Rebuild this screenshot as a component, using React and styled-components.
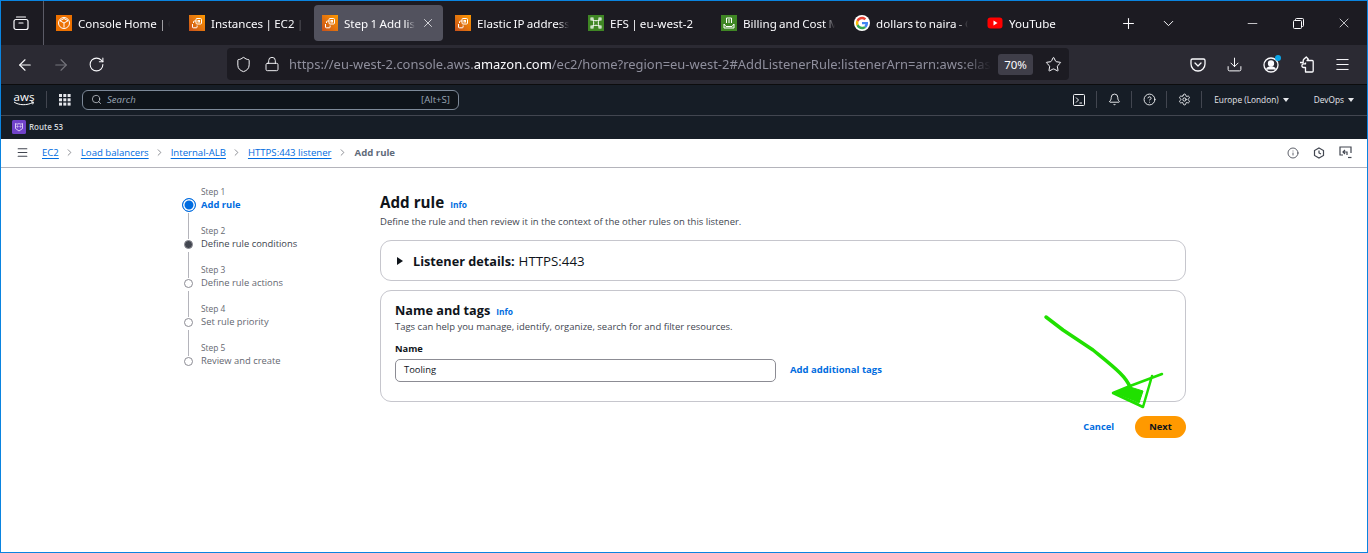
import { Fragment } from "react"
import styled, { createGlobalStyle } from "styled-components"
import {
  ArrowLeft, ArrowRight, RotateCw, Shield, Lock, Star, Download, Menu,
  Plus, ChevronDown, Minus, X, Search, Bell, Settings, CircleHelp, Info, ChevronRight,
} from "lucide-react"

const Global = createGlobalStyle`
  html, body { margin: 0; padding: 0; background: #fff; }
  body { width: 1368px; height: 553px; overflow: hidden; }
  * { box-sizing: border-box; }
`

const Frame = styled.div`
  position: relative;
  width: 1368px;
  height: 553px;
  border: 1px solid #0a84e0;
  display: flex;
  flex-direction: column;
  overflow: hidden;
  background: #fff;
  font-family: "Open Sans", "Noto Sans", sans-serif;
`
const Glyph = styled.svg`
  flex: none;
`

/* browser chrome */
const TabBar = styled.div`
  height: 44px;
  flex: none;
  background: #1c1b22;
  display: flex;
  align-items: stretch;
  color: #fbfbfe;
  font-family: "Noto Sans", "Open Sans", sans-serif;
`
const TabGroups = styled.div`
  width: 43px;
  flex: none;
  border-right: 1px solid #5b5b66;
  padding-right: 2px;
  display: flex;
  align-items: center;
  justify-content: center;
`
const Tab = styled.div`
  width: 133px;
  flex: none;
  display: flex;
  align-items: center;
  gap: 6px;
  padding: 4px 7px 4px 12px;
  position: relative;
  z-index: 0;
  font-size: 11.600px;
  word-spacing: -0.7px;

  &::before {
    content: "";
    display: ${p => (p.$active ? "block" : "none")};
    position: absolute;
    inset: 4px 0 4px 4px;
    border-radius: 4px;
    background: #52525e;
    z-index: -1;
  }
`
const TabTitle = styled.span`
  flex: 1;
  min-width: 0;
  white-space: nowrap;
  overflow: hidden;
  -webkit-mask-image: linear-gradient(to right, #000 88%, transparent 100%);
  mask-image: linear-gradient(to right, #000 88%, transparent 100%);
`
const TabClose = styled.span`
  display: flex;
  width: 14px;
  flex: none;
  margin-right: 1px;
`
const WindowTools = styled.div`
  display: flex;
  align-items: center;
  flex: 1;
`
const TabAction = styled.span`
  display: flex;
  width: 40px;
  justify-content: center;
`
const WindowButtons = styled.div`
  margin-left: auto;
  display: flex;
  align-items: center;
`
const WindowButton = styled.span`
  display: flex;
  width: 46px;
  justify-content: center;
`
const Toolbar = styled.div`
  height: 40px;
  flex: none;
  background: #2b2a33;
  display: flex;
  align-items: center;
  padding: 0 0 0 15px;
  color: #fbfbfe;
  border-bottom: 1px solid #0c0c0d;
`
const NavButtons = styled.div`
  display: flex;
  align-items: center;
  gap: 18px;
  width: 211px;
  flex: none;
`
const UrlBar = styled.div`
  width: 842px;
  height: 32px;
  flex: none;
  margin-top: -1px;
  background: #1c1b22;
  border-radius: 4px;
  display: flex;
  align-items: center;
  padding-left: 8px;
  font-family: "Noto Sans", "Open Sans", sans-serif;
`
const UrlText = styled.div`
  flex: 1;
  min-width: 0;
  margin-left: 9px;
  font-size: 12.950px;
  color: #8f8f9d;
  white-space: nowrap;
  overflow: hidden;
  -webkit-mask-image: linear-gradient(to right, #000 96%, transparent 100%);
  mask-image: linear-gradient(to right, #000 96%, transparent 100%);

  b { font-weight: 400; color: #fbfbfe; }
`
const ZoomBadge = styled.span`
  width: 35px;
  height: 21px;
  flex: none;
  margin: 0 12px 0 7px;
  border-radius: 3px;
  background: #3f3e49;
  color: #fbfbfe;
  font-size: 11.500px;
  display: flex;
  align-items: center;
  justify-content: center;
`
const UrlStar = styled(Star)`
  flex: none;
  margin-right: 7px;
`
const UrlIconRow = styled.span`
  display: flex;
  align-items: center;
  gap: 12px;
  flex: none;
`
const ToolIcons = styled.div`
  display: flex;
  align-items: center;
  gap: 20px;
  margin-left: 121px;
`
const ProfileIcon = styled.span`
  position: relative;
  display: flex;

  &::after {
    content: "";
    position: absolute;
    top: -2px;
    right: -2px;
    width: 6px;
    height: 6px;
    border-radius: 50%;
    background: #0aa5e8;
  }
`

/* aws console header */
const ConsoleNav = styled.div`
  height: 31px;
  flex: none;
  background: #161d26;
  border-bottom: 1px solid #424650;
  display: flex;
  align-items: center;
  padding: 0 0 1px 12px;
  color: #e5e7eb;
  font-size: 8.400px;
`
const AwsLogo = styled.div`
  width: 22px;
  flex: none;
  display: flex;
  flex-direction: column;
  align-items: center;
  color: #fff;
  font-weight: 400;
  font-size: 11.500px;
  line-height: 9px;
  margin-top: -1px;
`
const NavDivider = styled.span`
  width: 1px;
  height: 17px;
  flex: none;
  background: #424650;
  margin: ${p => p.$margin || "0"};
`
const Waffle = styled(Glyph)`
  margin-left: 12px;
`
const SearchBox = styled.div`
  width: 377px;
  height: 20px;
  flex: none;
  margin-left: 11px;
  border: 1px solid #7d8998;
  border-radius: 6px;
  background: #0f141a;
  display: flex;
  align-items: center;
  padding: 0 8px;
  gap: 5px;

  em { color: #9ba7b6; font-size: 9.600px; }
  span { margin-left: auto; color: #9ba7b6; font-size: 9.600px; }
`
const ConsoleRight = styled.div`
  margin-left: auto;
  display: flex;
  align-items: center;
  height: 100%;
  padding-right: 13px;
`
const NavIcon = styled.span`
  display: flex;
  width: 14px;
  justify-content: center;
  flex: none;
  color: #f3f4f6;
`
const NavMenu = styled.span`
  display: flex;
  align-items: center;
  gap: 4px;
  white-space: nowrap;
  margin-left: ${p => p.$left || 0}px;
  font-size: 8.300px;
  font-weight: 500;

  &::after {
    content: "";
    border-left: 3px solid transparent;
    border-right: 3px solid transparent;
    border-top: 4px solid #e5e7eb;
  }
`
const Favourites = styled.div`
  height: 23px;
  flex: none;
  background: #161d26;
  display: flex;
  align-items: center;
  gap: 3px;
  padding: 0 0 2px 11px;
  color: #d1d5db;
  font-size: 8px;
  font-weight: 600;
`

/* breadcrumbs */
const CrumbBar = styled.div`
  height: 29px;
  flex: none;
  background: #fff;
  border-bottom: 1px solid #b4b4bb;
  display: flex;
  align-items: center;
  padding: 0 15px 1px;
  font-size: 9.600px;
`
const Crumbs = styled.div`
  display: flex;
  align-items: center;
  margin-left: 13px;
`
const Crumb = styled.a`
  color: #006ce0;
  text-decoration: underline;
  text-underline-offset: 2px;
`
const CrumbCurrent = styled.span`
  color: #5f6b7a;
  font-weight: 700;
  margin-left: 1px;
`
const CrumbSep = styled.span`
  display: flex;
  width: 22px;
  justify-content: center;
  color: #656871;
`
const CrumbTools = styled.div`
  margin-left: auto;
  display: flex;
  align-items: center;
  gap: 14px;
  color: #424650;
`

/* page body */
const Page = styled.div`
  flex: 1;
  display: flex;
  align-items: flex-start;
  padding: 18px 0 0 174px;
  color: #0f141a;
`
const Steps = styled.ol`
  list-style: none;
  margin: 0;
  padding: 0;
  width: 205px;
  flex: none;
`
const Step = styled.li`
  display: grid;
  grid-template-columns: 13px 1fr;
  grid-template-rows: 12px 14px;
  align-content: start;
  column-gap: 6px;
  height: 39px;
  position: relative;
  padding-left: 7px;

  &:not(:last-child)::after {
    content: "";
    position: absolute;
    left: 13px;
    top: 27px;
    bottom: -14px;
    width: 1px;
    background: #b4b4bb;
  }
`
const StepLabel = styled.span`
  grid-column: 2;
  grid-row: 1;
  font-size: 8.400px;
  line-height: 12px;
  color: #656871;
`
const markSize = { current: 14, next: 9, todo: 9 }
const StepMark = styled.span`
  grid-column: 1;
  grid-row: 2;
  justify-self: center;
  align-self: center;
  border-radius: 50%;
  width: ${p => markSize[p.$state]}px;
  height: ${p => markSize[p.$state]}px;
  border: ${p => (p.$state === "current" ? "1.5px solid #006ce0" : "1px solid #8c8c94")};
  box-shadow: ${p => (p.$state === "current" ? "inset 0 0 0 1.5px #fff" : "none")};
  background: ${p => (p.$state === "current" ? "#006ce0" : p.$state === "next" ? "#424650" : "#fff")};
`
const StepTitle = styled.span`
  grid-column: 2;
  grid-row: 2;
  font-size: 9.400px;
  line-height: 14px;
  color: ${p => (p.$state === "current" ? "#006ce0" : p.$state === "next" ? "#424650" : "#656871")};
  font-weight: ${p => (p.$state === "current" ? 700 : 400)};
`
const Main = styled.main`
  width: 806px;
  flex: none;
`
const PageTitle = styled.div`
  display: flex;
  align-items: baseline;
  gap: 6px;
  margin-top: 6px;

  h1 { margin: 0; font-size: 15.200px; line-height: 20px; font-weight: 700; }
`
const InfoLink = styled.a`
  color: #006ce0;
  font-size: 8.400px;
  font-weight: 700;
`
const Lead = styled.p`
  margin: 3px 0 0;
  font-size: 9.500px;
  line-height: 14px;
  color: #424650;
`
const Card = styled.section`
  border: 1px solid #c6c6cd;
  border-radius: 11px;
  background: #fff;
`
const ListenerCard = styled(Card)`
  height: 41px;
  margin-top: 11px;
  display: flex;
  align-items: center;
  padding-left: 16px;
  font-size: 13.300px;

  b { font-size: 12.700px; font-weight: 700; margin-right: 4px; }
`
const Caret = styled.span`
  width: 0;
  height: 0;
  border-top: 4px solid transparent;
  border-bottom: 4px solid transparent;
  border-left: 6px solid #0f141a;
  margin-right: 10px;
`
const TagsCard = styled(Card)`
  height: 112px;
  margin-top: 9px;
  padding: 10px 14px;
`
const CardTitle = styled.div`
  display: flex;
  align-items: baseline;
  gap: 6px;

  h2 { margin: 0; font-size: 12.700px; line-height: 18px; font-weight: 700; }
`
const CardHint = styled.p`
  margin: 1px 0 0;
  font-size: 9.470px;
  line-height: 13px;
  color: #424650;
`
const FieldLabel = styled.div`
  margin-top: 9px;
  font-size: 9.300px;
  line-height: 13px;
  font-weight: 700;
`
const FieldRow = styled.div`
  display: flex;
  align-items: center;
  gap: 14px;
  margin-top: 4px;
`
const NameInput = styled.div`
  width: 381px;
  height: 23px;
  border: 1px solid #8c8c94;
  border-radius: 5px;
  display: flex;
  align-items: center;
  padding: 0 0 2px 8px;
  font-size: 9.400px;
`
const AddLink = styled.a`
  color: #006ce0;
  font-size: 9.500px;
  font-weight: 700;
  margin-bottom: 2px;
`
const Actions = styled.div`
  display: flex;
  justify-content: flex-end;
  align-items: center;
  gap: 21px;
  margin-top: 14px;
`
const CancelLink = styled.a`
  color: #006ce0;
  font-size: 9.300px;
  font-weight: 700;
  margin-bottom: 2px;
`
const NextButton = styled.button`
  width: 51px;
  height: 22px;
  border: none;
  border-radius: 12px;
  background: #ff9900;
  color: #0f141a;
  font-family: inherit;
  font-size: 9.300px;
  font-weight: 700;
  padding: 0 0 2px;
`
const Scribble = styled.svg`
  position: absolute;
  left: 0;
  top: 0;
  pointer-events: none;
`

function ServiceIcon({ kind }) {
  const bg = kind === "green" ? "#3f8624" : kind === "ec2" ? "url(#ec2grad)" : "#ed7100"
  return (
    <Glyph width="16" height="16" viewBox="0 0 16 16">
      <defs>
        <linearGradient id="ec2grad" x1="0" y1="1" x2="1" y2="0">
          <stop offset="0" stopColor="#c8511b" />
          <stop offset="1" stopColor="#ff9900" />
        </linearGradient>
      </defs>
      <rect width="16" height="16" fill={bg} />
      {kind === "box" && (
        <g fill="none" stroke="#fff" strokeWidth="1">
          <circle cx="8" cy="8" r="5.500" />
          <path d="M8 3.500l4 2.300M8 3.500L4 5.800M4 5.800L8 8l4-2.200M8 8v4.500" />
        </g>
      )}
      {kind === "ec2" && (
        <g fill="none" stroke="#fff" strokeWidth="1">
          <rect x="7" y="3.500" width="5.500" height="5.500" rx="1" />
          <rect x="9" y="5.500" width="1.500" height="1.500" />
          <path d="M7 6H5.500a1 1 0 00-1 1v1M3.500 9v3a.8.8 0 00.8.8h3a.8.8 0 00.8-.8v-1.500" />
        </g>
      )}
      {kind === "green" && (
        <g fill="none" stroke="#fff" strokeWidth="1">
          <path d="M5 5c2 1 4 1 6 0M5 11c2-1 4-1 6 0M5 5c1 2 1 4 0 6M11 5c-1 2-1 4 0 6" />
          <rect x="3" y="3" width="2" height="2" />
          <rect x="11" y="3" width="2" height="2" />
          <rect x="3" y="11" width="2" height="2" />
          <rect x="11" y="11" width="2" height="2" />
        </g>
      )}
    </Glyph>
  )
}

function BillingIcon() {
  return (
    <Glyph width="16" height="16" viewBox="0 0 16 16">
      <rect width="16" height="16" fill="#3f8624" />
      <g fill="none" stroke="#fff" strokeWidth="1">
        <path d="M5.500 8V3h5v5" />
        <path d="M3 9l2 2.500h6L13 9v4H3z" />
        <path d="M7 5h2M7 7h2" />
      </g>
    </Glyph>
  )
}

function GoogleIcon() {
  return (
    <Glyph width="16" height="16" viewBox="0 0 48 48">
      <circle cx="24" cy="24" r="24" fill="#fff" />
      <path fill="#ea4335" d="M24 13c3 0 5.300 1 7.200 2.800l5.300-5.300C33.300 7.500 29 5.500 24 5.500 16.700 5.500 10.500 9.700 7.500 15.800l6.200 4.800C15.100 16.200 19.200 13 24 13z" />
      <path fill="#4285f4" d="M42 24.500c0-1.300-.1-2.500-.3-3.700H24v7h10.200c-.4 2.300-1.800 4.300-3.700 5.600l6 4.600C40 34.700 42 30 42 24.500z" />
      <path fill="#fbbc05" d="M13.700 27.400c-.4-1.100-.6-2.200-.6-3.400s.2-2.300.6-3.400l-6.200-4.800C6.200 18.300 5.500 21.100 5.500 24s.7 5.700 2 8.200z" />
      <path fill="#34a853" d="M24 42.500c5 0 9.200-1.600 12.200-4.500l-6-4.600c-1.600 1.100-3.700 1.800-6.200 1.800-4.800 0-8.900-3.200-10.300-7.600l-6.200 4.800c3 6.100 9.200 10.100 16.500 10.100z" />
    </Glyph>
  )
}

function YoutubeIcon() {
  return (
    <Glyph width="16" height="16" viewBox="0 0 16 16">
      <rect x="0.500" y="2.500" width="15" height="11" rx="3" fill="#f00" />
      <path d="M6.500 5.500L10.500 8l-4 2.500z" fill="#fff" />
    </Glyph>
  )
}

function TabGroupsIcon() {
  return (
    <Glyph width="16" height="16" viewBox="0 0 16 16" fill="none" stroke="#fbfbfe" strokeWidth="1.200">
      <rect x="1" y="4.500" width="14" height="10" rx="2" />
      <path d="M3.500 2h9M6 8h4" strokeLinecap="round" />
    </Glyph>
  )
}

function PocketIcon() {
  return (
    <Glyph width="16" height="16" viewBox="0 0 16 16" fill="none" stroke="#fbfbfe" strokeWidth="1.300">
      <path d="M2.500 2h11A1.500 1.500 0 0115 3.500V7a7 7 0 01-14 0V3.500A1.500 1.500 0 012.500 2z" />
      <path d="M5 6l3 3 3-3" strokeLinecap="round" strokeLinejoin="round" />
    </Glyph>
  )
}

function ProfileGlyph() {
  return (
    <Glyph width="16" height="16" viewBox="0 0 16 16" fill="none" stroke="#fbfbfe" strokeWidth="1.300">
      <circle cx="8" cy="8" r="7" />
      <circle cx="8" cy="6.500" r="2.500" fill="#fbfbfe" />
      <path d="M3.500 12.500c1-2 2.500-2.500 4.500-2.500s3.500.5 4.500 2.500" fill="#fbfbfe" />
    </Glyph>
  )
}

function ExtensionIcon() {
  return (
    <Glyph width="15" height="17" viewBox="0 0 15 17" fill="none" stroke="#fbfbfe" strokeWidth="1.300" strokeLinejoin="round">
      <path d="M1 6.500h3.200V4.800a2 2 0 01.6-1.500L7.300 1l2 2.200-1.300 1.300h5.200a1 1 0 011 1V15a1 1 0 01-1 1H6.500v-4.500H4.700a1.800 1.800 0 010-3.600h1.800V6.500" />
    </Glyph>
  )
}

function RestoreIcon() {
  return (
    <Glyph width="11" height="11" viewBox="0 0 11 11" fill="none" stroke="#fbfbfe" strokeWidth="1">
      <rect x="0.500" y="2.500" width="8" height="8" rx="1" />
      <path d="M2.500 2.500v-1a1 1 0 011-1h6a1 1 0 011 1v6a1 1 0 01-1 1h-1" />
    </Glyph>
  )
}

function WaffleIcon() {
  const cells = []
  for (let y = 0; y < 3; y++) {
    for (let x = 0; x < 3; x++) {
      cells.push(<rect key={`${x}${y}`} x={x * 4.300} y={y * 4.300} width="3" height="3" fill="#e5e7eb" />)
    }
  }
  return <Waffle width="12" height="12" viewBox="0 0 12 12">{cells}</Waffle>
}

function TerminalIcon() {
  return (
    <Glyph width="12" height="12" viewBox="0 0 12 12" fill="none" stroke="#f3f4f6" strokeWidth="1">
      <rect x="0.500" y="0.500" width="11" height="11" rx="1" />
      <path d="M3 3.500L5.500 6 3 8.500M6.500 9H9" />
    </Glyph>
  )
}

function RouteIcon() {
  return (
    <Glyph width="14" height="14" viewBox="0 0 14 14">
      <rect width="14" height="14" rx="1.500" fill="#7042c9" />
      <g fill="none" stroke="#e4d9f7" strokeWidth="0.900">
        <path d="M3.500 3.500c1.200.8 2.300.8 3.500 0 1.200.8 2.300.8 3.500 0v5L7 11 3.500 8.500z" />
        <circle cx="5.500" cy="6.500" r="0.600" />
        <circle cx="8.500" cy="6.500" r="0.600" />
      </g>
    </Glyph>
  )
}

function ClockHex() {
  return (
    <Glyph width="12" height="12" viewBox="0 0 12 12" fill="none" stroke="#424650" strokeWidth="1.200">
      <path d="M6 1l4.500 2.500v5L6 11 1.500 8.500v-5z" />
      <path d="M6 3.500V6l2 1" />
    </Glyph>
  )
}

function ScreenIcon() {
  return (
    <Glyph width="13" height="13" viewBox="0 0 13 13" fill="none" stroke="#424650" strokeWidth="1.200">
      <path d="M4 9H1V1h11v6" />
      <path d="M6 4l-2 2 2 2M4 6h4v3" />
      <path d="M9 11.500h3.500" />
    </Glyph>
  )
}

const tabs = [
  { title: "Console Home | C", icon: <ServiceIcon kind="box" /> },
  { title: "Instances | EC2 | e", icon: <ServiceIcon kind="ec2" /> },
  { title: "Step 1 Add list", icon: <ServiceIcon kind="ec2" />, active: true },
  { title: "Elastic IP addresse", icon: <ServiceIcon kind="ec2" /> },
  { title: "EFS | eu-west-2", icon: <ServiceIcon kind="green" /> },
  { title: "Billing and Cost M", icon: <BillingIcon /> },
  { title: "dollars to naira - G", icon: <GoogleIcon /> },
  { title: "YouTube", icon: <YoutubeIcon /> },
]

const steps = [
  { label: "Step 1", title: "Add rule", state: "current" },
  { label: "Step 2", title: "Define rule conditions", state: "next" },
  { label: "Step 3", title: "Define rule actions", state: "todo" },
  { label: "Step 4", title: "Set rule priority", state: "todo" },
  { label: "Step 5", title: "Review and create", state: "todo" },
]

const crumbs = ["EC2", "Load balancers", "Internal-ALB", "HTTPS:443 listener"]

export default function App() {
  return (
    <Frame>
      <Global />
      <TabBar>
        <TabGroups><TabGroupsIcon /></TabGroups>
        {tabs.map(t => (
          <Tab key={t.title} $active={t.active}>
            {t.icon}
            <TabTitle>{t.title}</TabTitle>
            {t.active && <TabClose><X size={14} strokeWidth={1.3} /></TabClose>}
          </Tab>
        ))}
        <WindowTools>
          <TabAction><Plus size={17} strokeWidth={1.5} /></TabAction>
          <TabAction><ChevronDown size={17} strokeWidth={1.4} /></TabAction>
          <WindowButtons>
            <WindowButton><Minus size={15} strokeWidth={1.2} /></WindowButton>
            <WindowButton><RestoreIcon /></WindowButton>
            <WindowButton><X size={16} strokeWidth={1.1} /></WindowButton>
          </WindowButtons>
        </WindowTools>
      </TabBar>

      <Toolbar>
        <NavButtons>
          <ArrowLeft size={18} strokeWidth={1.5} />
          <ArrowRight size={18} strokeWidth={1.5} color="#75747c" />
          <RotateCw size={17} strokeWidth={1.5} />
        </NavButtons>
        <UrlBar>
          <UrlIconRow>
            <Shield size={17} strokeWidth={1.4} />
            <Lock size={16} strokeWidth={1.4} />
          </UrlIconRow>
          <UrlText>https://eu-west-2.console.aws.<b>amazon.com</b>/ec2/home?region=eu-west-2#AddListenerRule:listenerArn=arn:aws:elas</UrlText>
          <ZoomBadge>70%</ZoomBadge>
          <UrlStar size={17} strokeWidth={1.4} />
        </UrlBar>
        <ToolIcons>
          <PocketIcon />
          <Download size={17} strokeWidth={1.4} />
          <ProfileIcon><ProfileGlyph /></ProfileIcon>
          <ExtensionIcon />
          <Menu size={17} strokeWidth={1.4} />
        </ToolIcons>
      </Toolbar>

      <ConsoleNav>
        <AwsLogo>
          aws
          <svg width="22" height="5" viewBox="0 0 22 5" fill="none" stroke="#fff" strokeWidth="1">
            <path d="M1 1c5 3.500 13 3.500 19 .5M18 .8l2.500.3-.8 2.200" />
          </svg>
        </AwsLogo>
        <NavDivider $margin="0 0 0 11px" />
        <WaffleIcon />
        <SearchBox>
          <Search size={11} strokeWidth={1.6} color="#d1d5db" />
          <em>Search</em>
          <span>[Alt+S]</span>
        </SearchBox>
        <ConsoleRight>
          <NavIcon><TerminalIcon /></NavIcon>
          <NavDivider $margin="0 10px" />
          <NavIcon><Bell size={13} strokeWidth={1.7} /></NavIcon>
          <NavDivider $margin="0 10px" />
          <NavIcon><CircleHelp size={13} strokeWidth={1.7} /></NavIcon>
          <NavDivider $margin="0 10px" />
          <NavIcon><Settings size={13} strokeWidth={1.7} /></NavIcon>
          <NavDivider $margin="0 0 0 10px" />
          <NavMenu $left={12}>Europe (London)</NavMenu>
          <NavMenu $left={25}>DevOps</NavMenu>
        </ConsoleRight>
      </ConsoleNav>

      <Favourites>
        <RouteIcon />
        Route 53
      </Favourites>

      <CrumbBar>
        <Menu size={13} strokeWidth={2} color="#424650" />
        <Crumbs>
          {crumbs.map(c => (
            <Fragment key={c}>
              <Crumb>{c}</Crumb>
              <CrumbSep><ChevronRight size={11} strokeWidth={1.6} /></CrumbSep>
            </Fragment>
          ))}
          <CrumbCurrent>Add rule</CrumbCurrent>
        </Crumbs>
        <CrumbTools>
          <Info size={12} strokeWidth={1.7} />
          <ClockHex />
          <ScreenIcon />
        </CrumbTools>
      </CrumbBar>

      <Page>
        <Steps>
          {steps.map(s => (
            <Step key={s.label}>
              <StepLabel>{s.label}</StepLabel>
              <StepMark $state={s.state} />
              <StepTitle $state={s.state}>{s.title}</StepTitle>
            </Step>
          ))}
        </Steps>
        <Main>
          <PageTitle>
            <h1>Add rule</h1>
            <InfoLink>Info</InfoLink>
          </PageTitle>
          <Lead>Define the rule and then review it in the context of the other rules on this listener.</Lead>
          <ListenerCard>
            <Caret />
            <b>Listener details:</b> HTTPS:443
          </ListenerCard>
          <TagsCard>
            <CardTitle>
              <h2>Name and tags</h2>
              <InfoLink>Info</InfoLink>
            </CardTitle>
            <CardHint>Tags can help you manage, identify, organize, search for and filter resources.</CardHint>
            <FieldLabel>Name</FieldLabel>
            <FieldRow>
              <NameInput>Tooling</NameInput>
              <AddLink>Add additional tags</AddLink>
            </FieldRow>
          </TagsCard>
          <Actions>
            <CancelLink>Cancel</CancelLink>
            <NextButton>Next</NextButton>
          </Actions>
        </Main>
      </Page>

      <Scribble width="1366" height="551" viewBox="1 1 1366 551">
        <g fill="none" stroke="#20e000" strokeLinecap="round" strokeLinejoin="round">
          <path strokeWidth="3.500" d="M1046 317L1063 330L1093 350C1104 359 1113 366 1120 373C1125 378 1128 382 1130 387" />
          <path strokeWidth="2.500" d="M1162 374L1130 386L1113 393L1143 407L1152 376" />
          <path strokeWidth="1" fill="#20e000" d="M1114 393L1130 387L1143 391L1139 403z" />
        </g>
      </Scribble>
    </Frame>
  )
}
